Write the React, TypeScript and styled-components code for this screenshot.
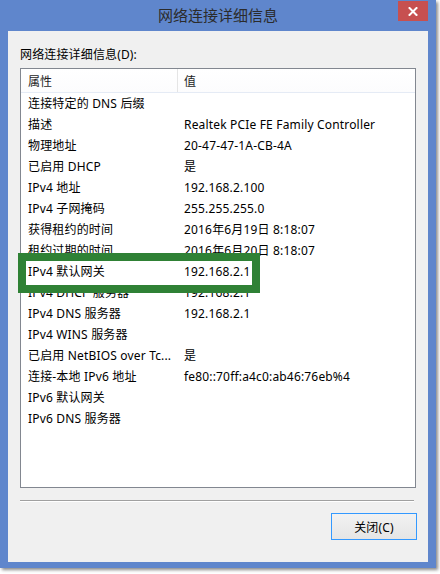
import React from "react";
import styled, { createGlobalStyle } from "styled-components";

const Global = createGlobalStyle`
  html, body { margin: 0; padding: 0; background: #ffffff; }
  body { font-family: "Noto Sans", "Noto Sans CJK SC", sans-serif; }
`;

const Page = styled.div`
  position: relative;
  width: 440px;
  height: 574px;
`;

const Window = styled.div`
  width: 436px;
  height: 568px;
  box-sizing: border-box;
  background: #5f86cc;
  display: flex;
  flex-direction: column;
  padding: 0 8px 6px 8px;
  box-shadow: 2px 2px 3px rgba(0, 0, 0, 0.45);
`;

const TitleBar = styled.div`
  height: 31px;
  display: grid;
  grid-template-columns: 1fr auto 1fr;
  align-items: start;
`;

const Title = styled.div`
  grid-column: 2;
  padding-top: 5px;
  font-size: 15px;
  line-height: 20px;
  color: #2b2b2b;
  font-family: "Noto Sans CJK SC", sans-serif;
`;

const CloseButton = styled.div`
  grid-column: 3;
  justify-self: end;
  margin-top: 1px;
  width: 30px;
  height: 20px;
  background: #c75050;
  display: flex;
  align-items: center;
  justify-content: center;
`;

const Client = styled.div`
  flex: 1;
  background: #f0f0f0;
  display: flex;
  flex-direction: column;
  padding: 16px 11px 0 12px;
`;

const GroupLabel = styled.div`
  font-size: 12px;
  line-height: 16px;
  letter-spacing: 0.15px;
  color: #000;
`;

const ListBox = styled.div`
  margin-top: 5px;
  width: 396px;
  height: 420px;
  box-sizing: border-box;
  border: 1px solid #828790;
  background: #ffffff;
  display: flex;
  flex-direction: column;
`;

const HeaderRow = styled.div`
  display: grid;
  grid-template-columns: 156px 1fr;
  height: 24px;
  box-sizing: border-box;
  border-bottom: 1px solid #e5ebf5;
  background: linear-gradient(#ffffff, #fcfcfd);
`;

const HeaderCell = styled.div<{ $divider?: boolean }>`
  display: flex;
  align-items: center;
  padding-left: ${(p) => (p.$divider ? "6px" : "7px")};
  padding-top: 1px;
  font-size: 12px;
  color: #1e1e1e;
  border-left: ${(p) => (p.$divider ? "1px solid #e5e5e5" : "none")};
`;

const Row = styled.div`
  display: grid;
  grid-template-columns: 157px 1fr;
  height: 21px;
  align-items: center;
`;

const Cell = styled.div<{ $value?: boolean }>`
  padding-left: ${(p) => (p.$value ? "6px" : "7px")};
  font-size: 12px;
  line-height: 16px;
  letter-spacing: 0.17px;
  color: #000;
  white-space: nowrap;
  overflow: hidden;
`;

const Separator = styled.div`
  margin-top: 12px;
  width: 394px;
  height: 1px;
  background: #a0a0a0;
  border-bottom: 1px solid #ffffff;
`;

const ButtonRow = styled.div`
  display: flex;
  justify-content: flex-end;
  margin-top: 11px;
`;

const Button = styled.div`
  width: 86px;
  height: 27px;
  box-sizing: border-box;
  border: 1px solid #3399ff;
  background: linear-gradient(#f2f2f2, #e5e5e5);
  display: flex;
  align-items: center;
  justify-content: center;
  font-size: 12px;
  letter-spacing: 0.15px;
  color: #000;
`;

const Highlight = styled.div`
  position: absolute;
  left: 18px;
  top: 253px;
  width: 242px;
  height: 40px;
  box-sizing: border-box;
  border: 8px solid #2f8135;
  pointer-events: none;
`;

const rows: [string, string][] = [
  ["连接特定的 DNS 后缀", ""],
  ["描述", "Realtek PCIe FE Family Controller"],
  ["物理地址", "20-47-47-1A-CB-4A"],
  ["已启用 DHCP", "是"],
  ["IPv4 地址", "192.168.2.100"],
  ["IPv4 子网掩码", "255.255.255.0"],
  ["获得租约的时间", "2016年6月19日 8:18:07"],
  ["租约过期的时间", "2016年6月20日 8:18:07"],
  ["IPv4 默认网关", "192.168.2.1"],
  ["IPv4 DHCP 服务器", "192.168.2.1"],
  ["IPv4 DNS 服务器", "192.168.2.1"],
  ["IPv4 WINS 服务器", ""],
  ["已启用 NetBIOS over Tc...", "是"],
  ["连接-本地 IPv6 地址", "fe80::70ff:a4c0:ab46:76eb%4"],
  ["IPv6 默认网关", ""],
  ["IPv6 DNS 服务器", ""],
];

export default function App() {
  return (
    <Page>
      <Global />
      <Window>
        <TitleBar>
          <Title>网络连接详细信息</Title>
          <CloseButton>
            <svg width="10" height="9" viewBox="0 0 10 9">
              <path d="M1.5 1 L8.5 8 M8.5 1 L1.5 8" stroke="#ffffff" strokeWidth="2" strokeLinecap="square" />
            </svg>
          </CloseButton>
        </TitleBar>
        <Client>
          <GroupLabel>网络连接详细信息(D):</GroupLabel>
          <ListBox>
            <HeaderRow>
              <HeaderCell>属性</HeaderCell>
              <HeaderCell $divider>值</HeaderCell>
            </HeaderRow>
            {rows.map(([k, v], i) => (
              <Row key={i}>
                <Cell>{k}</Cell>
                <Cell $value>{v}</Cell>
              </Row>
            ))}
          </ListBox>
          <Separator />
          <ButtonRow>
            <Button>关闭(C)</Button>
          </ButtonRow>
        </Client>
      </Window>
      <Highlight />
    </Page>
  );
}
